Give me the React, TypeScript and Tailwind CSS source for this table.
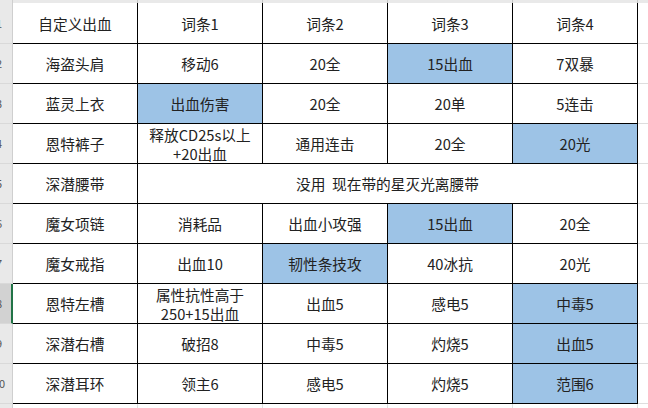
type Row = {
  n: number;
  cells: string[];
  blue?: number;
  merged?: boolean;
};

const ROWS: Row[] = [
  { n: 1, cells: ["自定义出血", "词条1", "词条2", "词条3", "词条4"] },
  { n: 2, cells: ["海盗头肩", "移动6", "20全", "15出血", "7双暴"], blue: 3 },
  { n: 3, cells: ["蓝灵上衣", "出血伤害", "20全", "20单", "5连击"], blue: 1 },
  { n: 4, cells: ["恩特裤子", "释放CD25s以上\n+20出血", "通用连击", "20全", "20光"], blue: 4 },
  { n: 5, cells: ["深潜腰带", "没用\u00a0\u00a0现在带的星灭光离腰带"], merged: true },
  { n: 6, cells: ["魔女项链", "消耗品", "出血小攻强", "15出血", "20全"], blue: 3 },
  { n: 7, cells: ["魔女戒指", "出血10", "韧性条技攻", "40冰抗", "20光"], blue: 2 },
  { n: 8, cells: ["恩特左槽", "属性抗性高于\n250+15出血", "出血5", "感电5", "中毒5"], blue: 4 },
  { n: 9, cells: ["深潜右槽", "破招8", "中毒5", "灼烧5", "出血5"], blue: 4 },
  { n: 10, cells: ["深潜耳环", "领主6", "感电5", "灼烧5", "范围6"], blue: 4 },
];

const SELECTED_ROW = 8;

function RowHeader({ n, selected }: { n: number; selected: boolean }) {
  return (
    <div
      className={`w-[13px] shrink-0 overflow-hidden flex items-center border-b border-[#d9d9d9] ${
        selected ? "bg-[#d2d2d2] border-r-2 border-r-[#217346]" : "bg-[#e9e9e9] border-r border-r-[#cfcfcf]"
      }`}
    >
      <div className="shrink-0 -ml-[14px] w-[26px] text-center text-[11px] text-[#555]">{n}</div>
    </div>
  );
}

export default function App() {
  return (
    <div
      className="w-[648px] h-[408px] overflow-hidden bg-white text-[#222] text-[14.7px]"
      style={{ fontFamily: '"Noto Sans CJK SC", "Noto Sans", sans-serif' }}
    >
      {/* column header strip, mostly scrolled off */}
      <div className="flex h-[3px]">
        <div className="w-[13px] shrink-0 bg-[#e9e9e9] border-r border-[#cfcfcf]" />
        {[125, 125, 125, 125, 125].map((w, i) => (
          <div key={i} className="shrink-0 bg-[#e9e9e9] border-r border-[#c6c6c6]" style={{ width: w }} />
        ))}
        <div className="flex-1 bg-[#e9e9e9]" />
      </div>

      {ROWS.map((row, ri) => (
        <div key={row.n} className={`flex ${ri === 0 ? "h-[41px]" : "h-[40px]"}`}>
          <RowHeader n={row.n} selected={row.n === SELECTED_ROW} />
          {row.cells.map((text, ci) => (
            <div
              key={ci}
              className={`shrink-0 flex items-center justify-center text-center whitespace-pre-line leading-[19px] border-r border-b border-black ${
                row.merged && ci === 1 ? "w-[500px]" : "w-[125px]"
              } ${row.blue === ci ? "bg-[#9dc3e6]" : ""}`}
            >
              {text}
            </div>
          ))}
          <div className="flex-1 border-b border-[#dedede]" />
        </div>
      ))}

      {/* partial next row */}
      <div className="flex h-[10px]">
        <div className="w-[13px] shrink-0 bg-[#e9e9e9] border-r border-[#cfcfcf]" />
        {[125, 125, 125, 125, 125].map((w, i) => (
          <div key={i} className="shrink-0 border-r border-[#dedede]" style={{ width: w }} />
        ))}
      </div>
    </div>
  );
}
